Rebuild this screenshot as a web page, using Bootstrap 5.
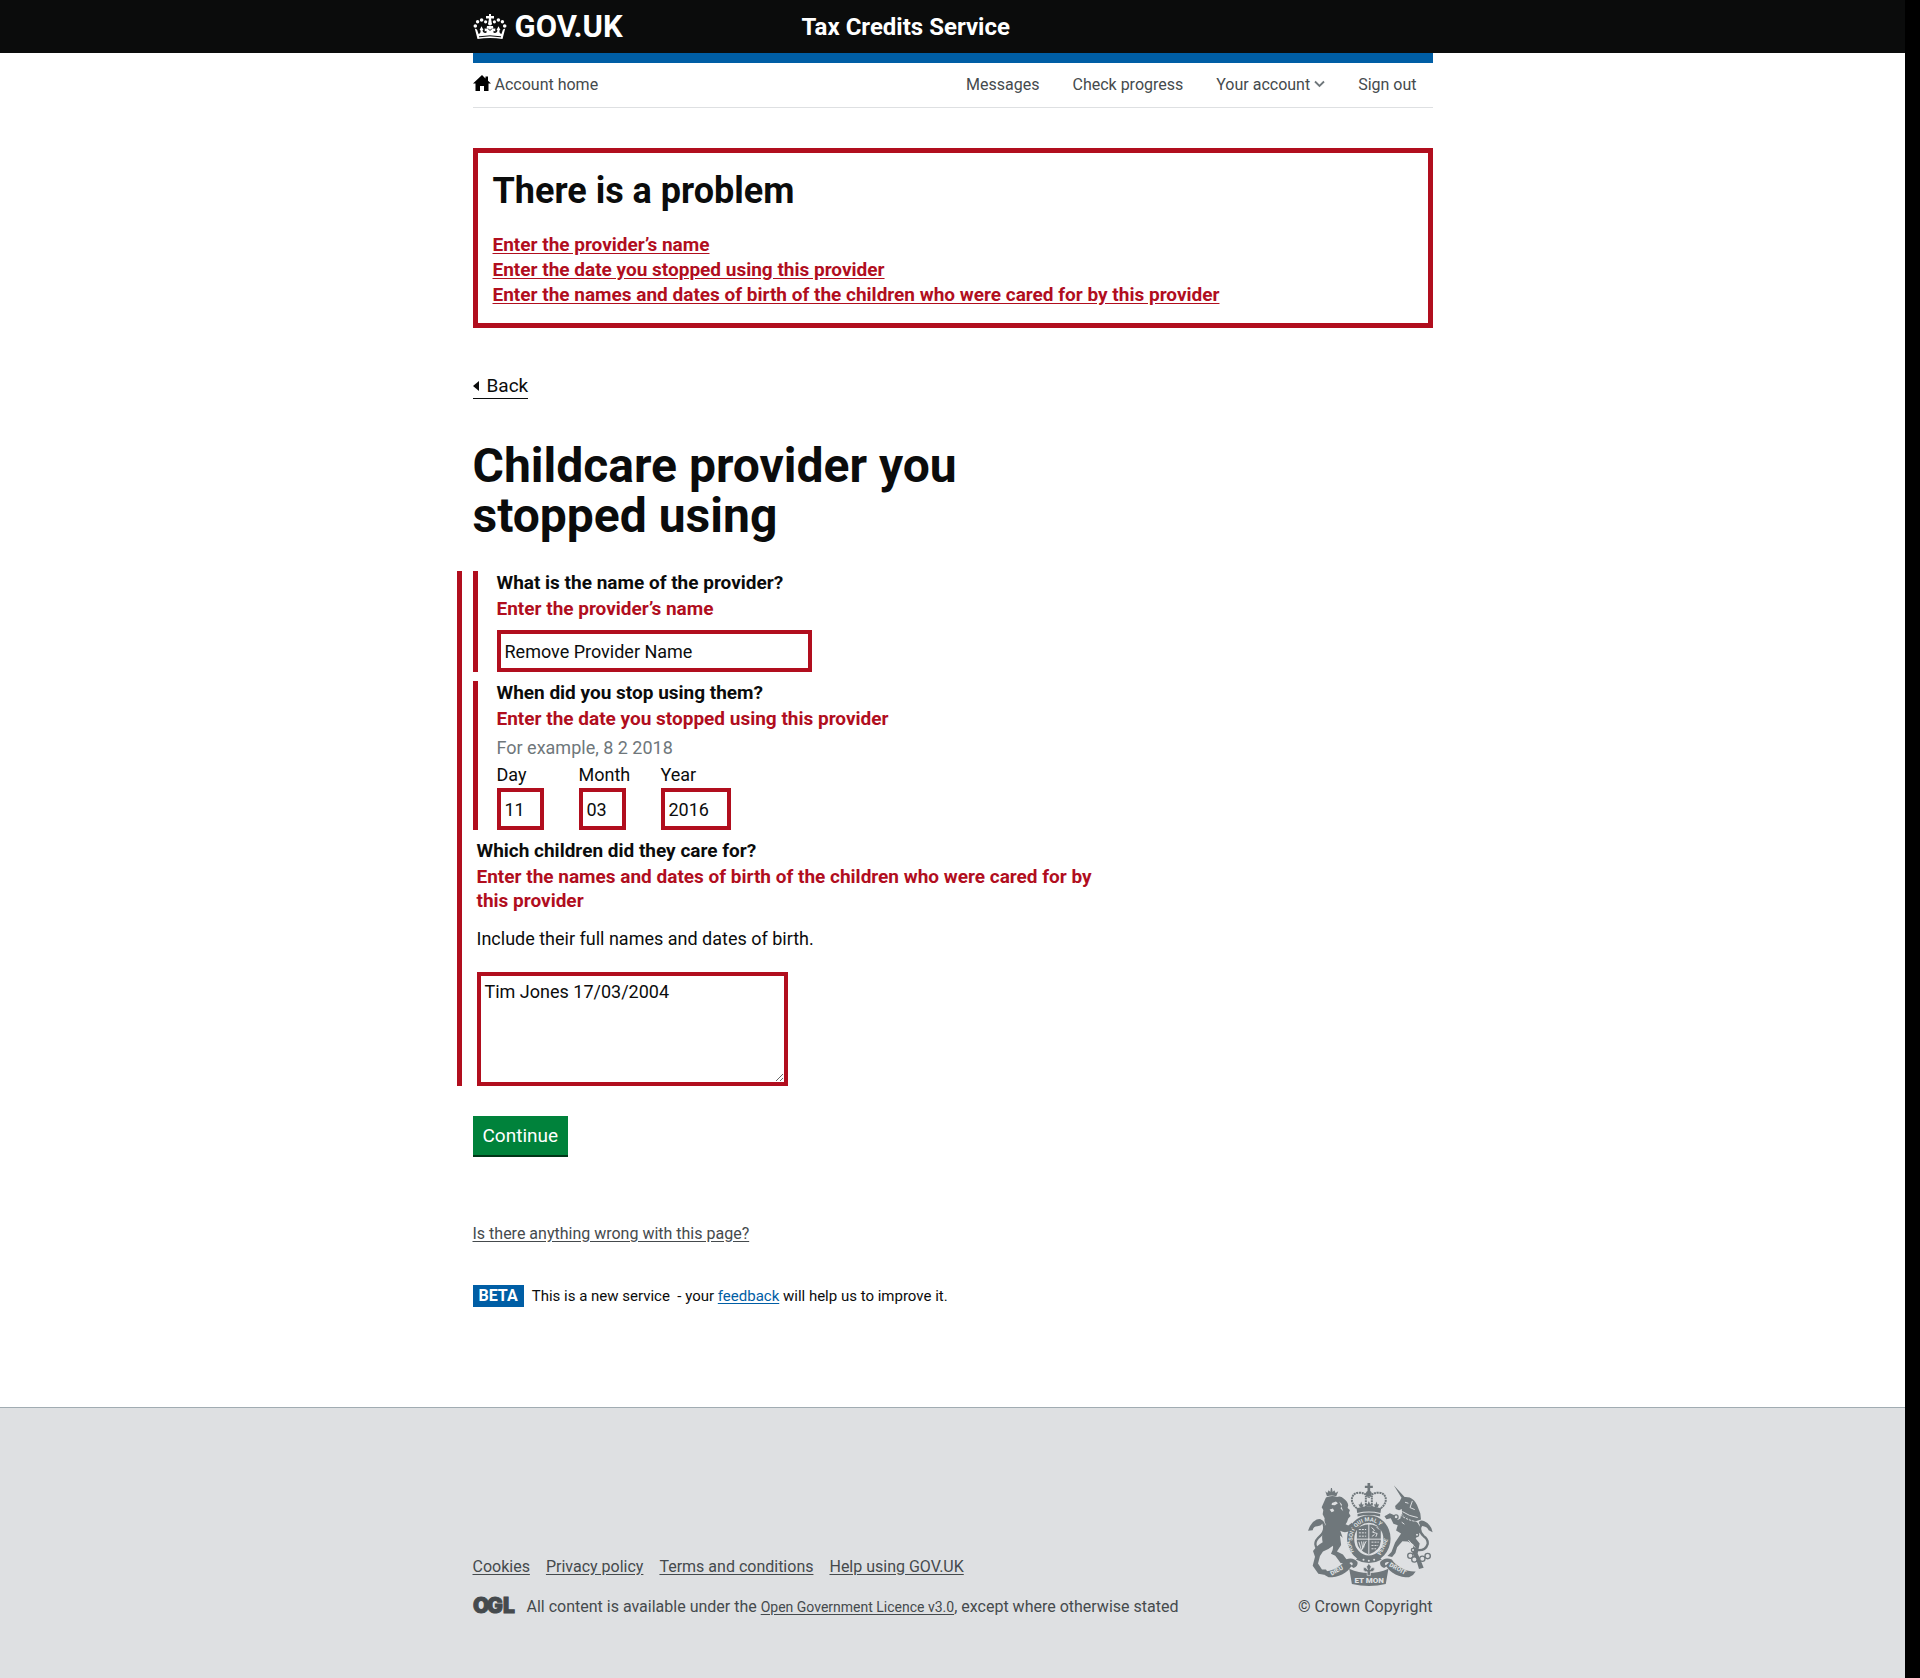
<!DOCTYPE html>
<html lang="en">
<head>
<meta charset="utf-8">
<meta name="viewport" content="width=device-width, initial-scale=1">
<title>Childcare provider you stopped using - Tax Credits Service - GOV.UK</title>
<link href="https://cdn.jsdelivr.net/npm/bootstrap@5.3.0/dist/css/bootstrap.min.css" rel="stylesheet">
<style>
:root { --gov-red: #b10e1e; --gov-blue: #005ea5; --gov-ink: #0b0c0c; --gov-grey: #454a4d; }
body { font-family: Roboto, "Liberation Sans", sans-serif; font-size: 18px; line-height: 24px; color: var(--gov-ink); background: #fff; }
.page-shell { border-right: 15px solid #000; }
.gov-wrap { width: 100%; max-width: 960px; margin: 0 auto; }
.gov-header { background: var(--gov-ink); height: 53px; }
.gov-header a { color: #fff; font-weight: 700; }
.gov-header .gov-logo { font-size: 31px; line-height: 30px; width: 329px; }
.gov-header .gov-title { font-size: 24px; line-height: 30px; }
.blue-bar { height: 10px; background: var(--gov-blue); }
.account-bar { height: 45px; border-bottom: 1px solid #dee0e2; font-size: 16px; line-height: 20px; padding-right: 16px; }
.account-bar a { color: var(--gov-grey); }
.account-links { gap: 33px; }
.problem-box { border: 5px solid var(--gov-red); padding: 18px 15px 16px; margin-top: 40px; }
.problem-box h2 { font-size: 36px; line-height: 40px; font-weight: 700; margin-bottom: 21px; }
.problem-box li { font-size: 19px; line-height: 25px; }
.problem-box a, .field-error { color: var(--gov-red); font-weight: 700; }
.back-link { display: inline-flex; gap: 8px; font-size: 19px; color: var(--gov-ink); border-bottom: 1px solid var(--gov-ink); margin: 46px 0 42px; }
.page-title { font-size: 48px; line-height: 50px; font-weight: 700; max-width: 630px; margin-bottom: 30px; }
.error-section { border-left: 5px solid var(--gov-red); margin-left: -16px; padding-left: 11px; max-width: 646px; gap: 9px; }
.error-group { border-left: 5px solid var(--gov-red); padding-left: 19px; }
.plain-group { padding-left: 4px; }
.field-label { display: block; font-size: 19px; line-height: 24px; font-weight: 700; margin-bottom: 2px; float: none; }
.field-error { display: block; font-size: 19px; }
.hint { color: #6f777b; margin-top: 5px; }
.form-control.gov-field { border: 4px solid var(--gov-red); border-radius: 0; padding: 4px; font-size: 18px; line-height: 24px; height: 42px; color: var(--gov-ink); }
.form-control.w-name { width: 315px; margin-top: 9px; }
.form-control.w-two { width: 47px; }
.form-control.w-four { width: 70px; }
.date-part label { display: block; margin: 3px 0 1px; }
.date-cell { width: 82px; }
.include-text { margin: 14px 0 21px; }
.form-control.gov-area { width: 311px; height: 114px; min-height: 0; resize: both; }
.btn-go { background: #00823b; color: #fff; border: 0; border-radius: 0; box-shadow: 0 2px 0 #003618; font-size: 19px; line-height: 24px; padding: 8px 10px 7px; margin-top: 30px; }
.btn-go:hover { background: #00692f; color: #fff; }
.small-line { font-size: 16px; line-height: 20px; }
.report-link { color: var(--gov-grey); margin-top: 69px; }
.phase-line { gap: 8px; margin: 41px 0 100px; line-height: 22px; }
.phase-tag { background: var(--gov-blue); color: #fff; font-weight: 700; padding: 0 6px; }
.phase-text { font-size: 15px; }
.phase-line a { color: var(--gov-blue); }
.gov-footer { background: #dee0e2; border-top: 1px solid #a1acb2; color: var(--gov-grey); padding: 75px 0 61px; }
.gov-footer a { color: var(--gov-grey); }
.footer-links { gap: 16px; margin-bottom: 20px; }
.licence-link { font-size: 14px; }
.crest { color: #6f777b; margin-bottom: 11px; }
.ogl-mark { overflow: visible; }
a { text-underline-offset: 2px; }
</style>
</head>
<body>
<div class="page-shell d-flex flex-column min-vh-100">
  <header class="gov-header">
    <div class="gov-wrap d-flex align-items-center h-100">
      <a class="gov-logo d-flex align-items-center text-decoration-none" href="#">
        <svg class="me-2" width="34" height="26" viewBox="0 0 34 26" fill="#fff" aria-hidden="true">
          <path d="M16 0h2v2h3v2.400h-3l.6 3.600h-3.200L16 4.400h-3V2h3z"/>
          <circle cx="17" cy="9.500" r="2"/>
          <circle cx="12.600" cy="7.800" r="1.600"/><circle cx="8.600" cy="6" r="1.800"/><circle cx="4.600" cy="7.800" r="1.700"/><circle cx="2.300" cy="12" r="1.800"/>
          <circle cx="21.400" cy="7.800" r="1.600"/><circle cx="25.400" cy="6" r="1.800"/><circle cx="29.400" cy="7.800" r="1.700"/><circle cx="31.700" cy="12" r="1.800"/>
          <path d="M1.800 14.500l2.200 1 1.600 4.500c1.600-.4 2.200-1.800 1.900-3.800l-.9-.2 1.900-3.700 2 3.600-1 .4c.2 2 1.600 3 4 2.500v-2l-1.800.8v-3.400l1.800.8.5-3h6l.5 3 1.800-.8v3.400l-1.800-.8v2c2.400.5 3.800-.5 4-2.500l-1-.4 2-3.600 1.900 3.700-.9.200c-.3 2 .3 3.400 1.900 3.800l1.600-4.500 2.200-1L29.500 25c-8-1.400-17-1.400-25 0z"/>
          <path d="M6 22.800q11-2 22 0M15 14.500l2 2 2-2" fill="none" stroke="#0b0c0c"/>
        </svg>
        <span>GOV.UK</span>
      </a>
      <a class="gov-title text-decoration-none" href="#">Tax Credits Service</a>
    </div>
  </header>

  <div class="gov-wrap">
    <div class="blue-bar"></div>
    <nav class="account-bar d-flex justify-content-between align-items-center" aria-label="Account">
      <a class="d-flex text-decoration-none" href="#">
        <svg class="me-1" width="18" height="16" viewBox="0 0 18 16" aria-hidden="true"><path fill="#000" d="M9 0L0 8.500h2.500V16H7v-5h4v5h4.500V8.500H18L15 5.700V1.500h-2.500v2z"/></svg>
        Account home
      </a>
      <div class="account-links d-flex">
        <a class="text-decoration-none" href="#">Messages</a>
        <a class="text-decoration-none" href="#">Check progress</a>
        <a class="text-decoration-none" href="#">Your account
          <svg width="11" height="12" viewBox="0 0 11 12" aria-hidden="true"><path d="M1 1.500l4.500 4.500L10 1.500" fill="none" stroke="#6f777b" stroke-width="1.800"/></svg></a>
        <a class="text-decoration-none" href="#">Sign out</a>
      </div>
    </nav>
  </div>

  <main class="gov-wrap">
    <section class="problem-box" aria-labelledby="problem-title">
      <h2 id="problem-title">There is a problem</h2>
      <ul class="list-unstyled mb-0">
        <li><a href="#provider">Enter the provider’s name</a></li>
        <li><a href="#day">Enter the date you stopped using this provider</a></li>
        <li><a href="#children">Enter the names and dates of birth of the children who were cared for by this provider</a></li>
      </ul>
    </section>

    <a class="back-link text-decoration-none align-items-center" href="#">
      <svg width="6" height="10" viewBox="0 0 6 10" aria-hidden="true"><path fill="#0b0c0c" d="M6 0v10L0 5z"/></svg>Back</a>

    <h1 class="page-title">Childcare provider you<br>stopped using</h1>

    <form>
      <div class="error-section d-flex flex-column">
        <div class="error-group">
          <label class="field-label" for="provider">What is the name of the provider?</label>
          <span class="field-error">Enter the provider’s name</span>
          <input class="form-control gov-field w-name" id="provider" type="text" value="Remove Provider Name">
        </div>
        <div class="error-group">
          <fieldset>
            <legend class="field-label">When did you stop using them?</legend>
            <span class="field-error">Enter the date you stopped using this provider</span>
            <div class="hint">For example, 8 2 2018</div>
            <div class="d-flex">
              <div class="date-cell"><div class="date-part"><label for="day">Day</label><input class="form-control gov-field w-two" id="day" type="text" value="11"></div></div>
              <div class="date-cell"><div class="date-part"><label for="month">Month</label><input class="form-control gov-field w-two" id="month" type="text" value="03"></div></div>
              <div class="date-part"><label for="year">Year</label><input class="form-control gov-field w-four" id="year" type="text" value="2016"></div>
            </div>
          </fieldset>
        </div>
        <div class="plain-group">
          <label class="field-label" for="children">Which children did they care for?</label>
          <span class="field-error">Enter the names and dates of birth of the children who were cared for by this provider</span>
          <p class="include-text">Include their full names and dates of birth.</p>
          <textarea class="form-control gov-field gov-area" id="children">Tim Jones 17/03/2004</textarea>
        </div>
      </div>
      <button class="btn btn-go" type="submit">Continue</button>
    </form>

    <div class="small-line"><a class="report-link d-inline-block" href="#">Is there anything wrong with this page?</a></div>
    <div class="phase-line small-line d-flex">
      <strong class="phase-tag">BETA</strong>
      <span class="phase-text">This is a new service &nbsp;- your <a href="#">feedback</a> will help us to improve it.</span>
    </div>
  </main>

  <footer class="gov-footer small-line flex-grow-1">
    <div class="gov-wrap d-flex justify-content-between align-items-end">
      <div>
        <div class="footer-links d-flex">
          <a href="#">Cookies</a>
          <a href="#">Privacy policy</a>
          <a href="#">Terms and conditions</a>
          <a href="#">Help using GOV.UK</a>
        </div>
        <div class="d-flex">
          <svg class="ogl-mark" width="54" height="17" viewBox="0 0 54 17" role="img" aria-label="OGL"><text x="0 14 30" y="16" font-family="Inter" font-weight="900" font-size="21" fill="#454a4d" stroke="#454a4d">OGL</text></svg>
          <span>All content is available under the <a class="licence-link" href="#">Open Government Licence v3.0</a>, except where otherwise stated</span>
        </div>
      </div>
      <div class="text-end">
        <svg class="crest d-block ms-auto" width="125" height="103" viewBox="84 68 376 310" fill="currentColor" aria-hidden="true">
          <!-- royal crown -->
          <g fill="none" stroke="currentColor" stroke-width="6" stroke-dasharray="6 2">
            <path d="M231 144C207 126 214 98 236 97Q258 97 266 112"/><path d="M303 144C327 126 320 98 298 97Q276 97 267 112"/>
            <path d="M258 142V106M276 142V106"/>
          </g>
          <path d="M263 68h8v8h8v7h-8v9a9 9 0 1 1-8 0v-9h-8v-7h8z"/>
          <path d="M230 144q37-12 74 0l-2 14q-35-9-70 0zM233 161q34-9 68 0v8q-34-9-68 0z"/>
          <path d="M240 141l-4-9 5 1 3-9 3 9 5-1-4 8zM261 139l-5-8 7 1 4-10 4 10 7-1-5 8zM286 140l-4-8 5 1 3-9 3 9 5-1-4 9z"/>
          <!-- garter and shield -->
          <path fill-rule="evenodd" d="M267 165a65 70 0 1 1 0 141a65 70 0 1 1 0-141zM267 188a44 49 0 1 0 0 98a44 49 0 1 0 0-98z"/>
          <path id="garter" d="M219 248a49 54 0 1 1 96 0" fill="none"/>
          <g fill="#dee0e2" font-family="Roboto, sans-serif" font-weight="700" font-size="17">
            <text><textPath href="#garter" startOffset="6">SOIT QUI MAL Y</textPath></text>
            <text transform="translate(222 275) rotate(-112)">HON</text>
            <text transform="translate(303 286) rotate(-65)">PENSE</text>
          </g>
          <path d="M231 205q36-24 72 0v38q-2 28-36 40-34-12-36-40z"/>
          <g fill="none" stroke="#dee0e2" stroke-width="3">
            <path d="M267 191v92M230 237h74"/>
            <path d="M237 208h22M237 218h22M237 228h22M275 246h22M275 256h20M275 266h14" stroke-dasharray="6 3"/>
            <path d="M275 202l9 8-6 6 14 4-4 10M290 200l8 8M276 229l8-6M237 245l8 26 14-28M245 244l4 22M252 244v18"/>
          </g>
          <path d="M238 289q29 20 58 0l10 9q-39 22-78 0z"/>
          <g fill="#dee0e2"><circle cx="251" cy="299" r="3"/><circle cx="267" cy="302" r="3"/><circle cx="283" cy="299" r="3"/></g>
          <!-- lion -->
          <path d="M136 93l5 15q14-5 28 0l6-15-8 5-4-8-5 5-2-12h-3l-2 12-5-5-4 8z"/>
          <path d="M138 112q16-8 33-2 12-4 20 5 12 8 14 20l-2 8 7 6-3 9 5 9-7 8q-3 12-8 17l8 4 11-8 3 7-8 8 6 2-2 6-12 4q-12 3-22-3l7 20-3 20-14 22 18 9 11 15h8l6 8-10 5-22-2-16-22-13-6q8-14 6-24-14 12-30 17l-9 14-6 22 12 18h12l6 9-12 7-17-3-17-24 7-27-6-17q12-18 29-27-6-28 9-54-5-8-3-18l-6-12 2-13-5-8z"/>
          <path d="M120 272q-12-6-14-20 0-12 14-24 16-14 12-32-2-14-12-14" fill="none" stroke="currentColor" stroke-width="7"/>
          <path d="M84 212q8-26 26-34 16-6 18 10-2 8-16 10-12 0-14 12z"/>
          <path d="M156 128l12-4 6 5-9 6-10-1zM149 148l10-3 4 7-8 4zM178 124l8 9-4 12 8 8M160 166l8 6M151 179l7 6M168 190l5 7M180 226l12 9v12l-8 10" fill="#dee0e2"/>
          <!-- unicorn -->
          <path d="M342 75l34 37-8 5zM346 137l14-14 6-12 12-1 12 2q14 6 22 22l10 26 2 18-18 6-38-20-2-18-8 4-10-4z"/>
          <path d="M364 163l42 18q18 12 15 36l-13 18 12 15-6 30 12 28 6 15-14 4-9-30-11-18 3-27-17-8-16-1-16 18-5 18-10 12-14-3 12-12 11-29 18-27-15-9 5-16-13-4-8-17-13 3-6-9 16-9 14 6 10 14 8-4z"/>
          <g fill="none" stroke="#dee0e2" stroke-width="3">
            <path d="M362 164q20 16 48 20" stroke-dasharray="7 3"/><path d="M368 154q20 14 46 18M376 126l10 3M398 122l-7 20 14 6M366 186l8 6M386 240l20 22"/>
          </g>
          <path d="M414 270q24 2 30-18 2-15-12-24-14-12-10-28 4-12 16-10" fill="none" stroke="currentColor" stroke-width="7"/>
          <path d="M459 216q-6-26-26-34-14-4-16 6 2 9 14 10 12 2 16 12z"/>
          <g fill="#dee0e2" stroke="currentColor" stroke-width="4"><circle cx="392" cy="287" r="8"/><circle cx="404" cy="298" r="8"/><circle cx="428" cy="296" r="8"/><circle cx="444" cy="288" r="8"/><circle cx="400" cy="270" r="5"/><circle cx="349" cy="170" r="6"/><circle cx="412" cy="224" r="5"/></g>
          <!-- motto scroll -->
          <g id="scroll-side"><path d="M126 334C150 336 182 322 198 298L216 316C202 340 175 352 146 352Q132 346 126 334z"/><path d="M198 298q22-8 35 8 2 14-12 18l-9-6q8-2 6-9-7-6-15-1z"/></g>
          <use href="#scroll-side" transform="translate(534 0) scale(-1 1)"/>
          <path d="M208 326q58 26 118 0l-8 46q-50 12-102 0z"/>
          <path d="M267 310l7 10-3 9q4-9 12-6 4 8-6 12h-5v11h-10v-11h-5q-10-4-6-12 8-3 12 6l-3-9z" stroke="#dee0e2" stroke-width="2"/>
          <g fill="#dee0e2" font-family="Roboto, sans-serif" font-weight="900" font-size="19">
            <text transform="translate(155 347) rotate(-29)">DIEU</text>
            <text x="224" y="369" font-size="24">ET MON</text>
            <text transform="translate(327 318) rotate(29)">DROIT</text>
          </g>
        </svg>
        <span>© Crown Copyright</span>
      </div>
    </div>
  </footer>
</div>
<script src="https://cdn.jsdelivr.net/npm/bootstrap@5.3.0/dist/js/bootstrap.bundle.min.js"></script>
</body>
</html>
